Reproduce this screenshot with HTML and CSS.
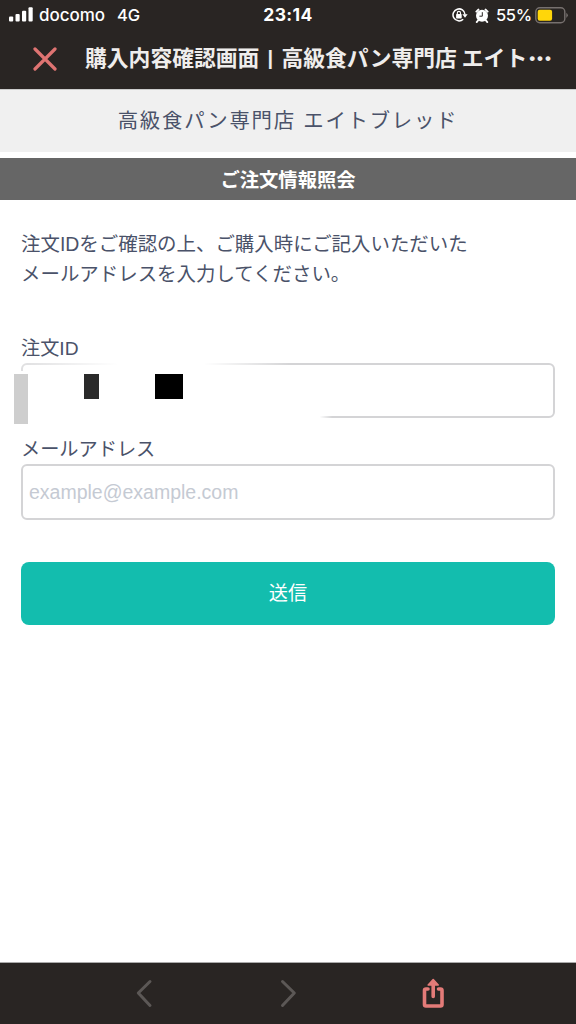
FILE: index.html
```html
<!DOCTYPE html>
<html lang="ja">
<head>
<meta charset="utf-8">
<title>購入内容確認画面 | 高級食パン専門店 エイトブレッド</title>
<link rel="stylesheet" href="styles.css">
</head>
<body>
<div class="screen">
  <header class="top">
    <div class="status">
      <div class="status-left">
        <svg class="signal" width="24" height="15" viewBox="0 0 24 15" fill="#fff"><rect x="0" y="9.5" width="4.2" height="5" rx="1"/><rect x="6.5" y="7" width="4.2" height="7.5" rx="1"/><rect x="13" y="3.8" width="4.2" height="10.7" rx="1"/><rect x="19.5" y="0.3" width="4.2" height="14.2" rx="1"/></svg>
        <span class="carrier">docomo</span><span class="network">4G</span>
      </div>
      <div class="clock">23:14</div>
      <div class="status-right">
        <svg class="lock" width="16" height="14" viewBox="0 0 16 14"><path d="M11.2 11.2A6 6 0 1 1 13 6.5" fill="none" stroke="#fff" stroke-width="1.5"/><path d="M10.4 6.2h5.2L13 9.8z" fill="#fff"/><rect x="4.1" y="6" width="5.6" height="4.5" rx=".7" fill="#fff"/><path d="M5.3 6.3V5a1.6 1.6 0 0 1 3.2 0v1.3" fill="none" stroke="#fff" stroke-width="1.1"/></svg>
        <svg class="alarm" width="14" height="15" viewBox="0 0 14 15"><circle cx="7" cy="7.8" r="6" fill="#fff"/><path d="M1.4 3.6 3.4 1.6M12.6 3.6 10.6 1.6M3 12.5 1.8 14M11 12.5 12.2 14" stroke="#fff" stroke-width="2" stroke-linecap="round"/><path d="M7.3 4.2v4H4.4" fill="none" stroke="#292523" stroke-width="1"/></svg>
        <span class="percent">55%</span>
        <svg class="battery" width="34" height="17" viewBox="0 0 34 17"><rect x=".8" y=".8" width="29" height="15" rx="4" fill="none" stroke="#77716f" stroke-width="1.4"/><rect x="2.7" y="2.8" width="14.4" height="11" rx="2" fill="#ffd60a"/><path d="M31.3 5.7q3 2.6 0 5.2z" fill="#77716f"/></svg>
      </div>
    </div>
    <div class="titlebar">
      <svg class="close" width="24" height="24" viewBox="0 0 24 24"><path d="M2 2 22 22M22 2 2 22" stroke="#df7472" stroke-width="3.2" stroke-linecap="round"/></svg>
      <div class="title">購入内容確認画面<span class="divider">|</span>高級食パン専門店 エイト<span class="dots">•••</span></div>
    </div>
  </header>
  <main class="page">
    <div class="shop">高級食パン専門店 エイトブレッド</div>
    <h1 class="heading">ご注文情報照会</h1>
    <form class="form">
      <p class="lead">注文IDをご確認の上、ご購入時にご記入いただいた<br>メールアドレスを入力してください。</p>
      <label class="label" for="order">注文ID</label>
      <div class="field">
        <input class="input" id="order" type="text">
        <span class="fade fade-top"></span>
        <span class="fade fade-bottom"></span>
        <span class="mask mask-gray"></span>
        <span class="mask mask-dark"></span>
        <span class="mask mask-black"></span>
      </div>
      <label class="label label-mail" for="mail">メールアドレス</label>
      <input class="input input-mail" id="mail" type="email" placeholder="example@example.com">
      <button class="submit" type="button">送信</button>
    </form>
  </main>
  <nav class="toolbar">
    <svg width="144" height="60" viewBox="0 0 144 60"><path d="M78 18.5 66.3 30 78 42.5" fill="none" stroke="#5c5856" stroke-width="3" stroke-linecap="round" stroke-linejoin="round"/></svg>
    <svg width="144" height="60" viewBox="0 0 144 60"><path d="M66.5 18.5 78.3 30 66.5 42.5" fill="none" stroke="#5c5856" stroke-width="3" stroke-linecap="round" stroke-linejoin="round"/></svg>
    <svg width="144" height="60" viewBox="0 0 144 60"><path d="M68 26H66q-1.500 0-1.500 1.500V41.500q0 1.500 1.500 1.500H80.500q1.500 0 1.500-1.500V27.500q0-1.500-1.500-1.500H78.500M73.200 33.500V20" fill="none" stroke="#e37b78" stroke-width="3.6" stroke-linecap="round" stroke-linejoin="round"/><path d="M73.200 16.500 68.200 22H78.200z" fill="#e37b78" stroke="#e37b78" stroke-width="1.600" stroke-linejoin="round"/></svg>
  </nav>
</div>
</body>
</html>
```
FILE: styles.css
```css
* { box-sizing: border-box; }
body {
  margin: 0;
  background: #fff;
  color: #4a5269;
  font-family: "Liberation Sans", "Noto Sans CJK JP", sans-serif;
}
.screen { width: 576px; height: 1024px; display: flex; flex-direction: column; overflow: hidden; }
.top { height: 89px; background: #292523; color: #fff; flex: none; }
.status {
  height: 30px;
  display: grid;
  grid-template-columns: 1fr auto 1fr;
  align-items: center;
  font: 500 17.5px/30px Inter, sans-serif;
}
.status-left { display: flex; align-items: center; padding-left: 9px; }
.signal { margin-right: 6px; margin-top: -1px; }
.carrier { font-size: 17px; letter-spacing: -.05px; }
.network { margin-left: 12px; font-size: 16.5px; }
.clock { font-size: 17.5px; font-weight: 700; letter-spacing: .35px; }
.status-right { display: flex; align-items: center; justify-content: flex-end; padding-right: 7px; }
.lock { margin-right: 7px; }
.alarm { margin-right: 7px; }
.percent { font-size: 16.5px; width: 36px; margin-right: 3px; letter-spacing: -.35px; }
.titlebar { height: 57px; display: flex; align-items: center; padding-left: 33px; }
.close { flex: none; }
.title {
  margin: -3px 0 0 28px;
  color: #efedec;
  font: 700 21.8px/30px "Noto Sans CJK JP", sans-serif;
  white-space: nowrap;
}
.divider { display: inline-block; width: 22px; text-align: center; font: 700 20px/20px "Liberation Sans", sans-serif; vertical-align: 1px; }
.dots { font: 700 17px/20px "Liberation Sans", sans-serif; letter-spacing: 1.9px; margin-left: 2px; vertical-align: 2px; }
.page { flex: 1; }
.shop {
  height: 63px;
  background: #f0f0f0;
  border-top: 1px solid #ccc;
  text-align: center;
  font-size: 20.4px;
  line-height: 63px;
  letter-spacing: 1.75px;
}
.heading {
  height: 42px;
  margin: 6px 0 0;
  background: #666;
  color: #fff;
  text-align: center;
  font-size: 19.3px;
  line-height: 45px;
}
.form { padding: 29px 21px 0; display: flex; flex-direction: column; }
.lead { margin: 0; font-size: 19.45px; line-height: 30px; white-space: nowrap; }
.label { margin-top: 44px; height: 30px; font-size: 19.2px; line-height: 31px; }
.label-mail { margin-top: 16px; }
.field { position: relative; height: 55px; }
.input {
  display: block;
  width: 100%;
  height: 55px;
  padding: 0 6px;
  border: 2px solid #d4d4d6;
  border-radius: 6px;
  background: #fff;
  color: #4a5269;
  font: 19.5px "Liberation Sans", sans-serif;
}
.input-mail { height: 56px; }
.input::placeholder { color: #c5cad3; opacity: 1; }
.fade { position: absolute; }
.fade-top {
  left: -1px; top: -1px; width: 271px; height: 30px;
  background: linear-gradient(90deg, rgba(255,255,255,.25), #fff 36%, #fff 68%, rgba(255,255,255,0));
}
.fade-bottom {
  left: -1px; top: 8px; width: 312px; height: 48px;
  background: linear-gradient(90deg, #fff 96%, rgba(255,255,255,0));
}
.mask { position: absolute; }
.mask-gray { left: -7px; top: 11px; width: 14px; height: 50px; background: #cecece; }
.mask-dark { left: 63px; top: 11px; width: 15px; height: 25px; background: #2a2a2a; }
.mask-black { left: 134px; top: 11px; width: 28px; height: 25px; background: #000; }
.submit {
  height: 63px;
  margin-top: 42px;
  padding: 0 0 2px;
  border: 0;
  border-radius: 8px;
  background: #13bdae;
  color: #fff;
  font: 19.2px/61px "Noto Sans CJK JP", sans-serif;
}
.toolbar { height: 62px; padding-left: 72px; display: flex; background: #292523; border-top: 1px solid #aaa; flex: none; }
.toolbar svg { flex: none; }
```
